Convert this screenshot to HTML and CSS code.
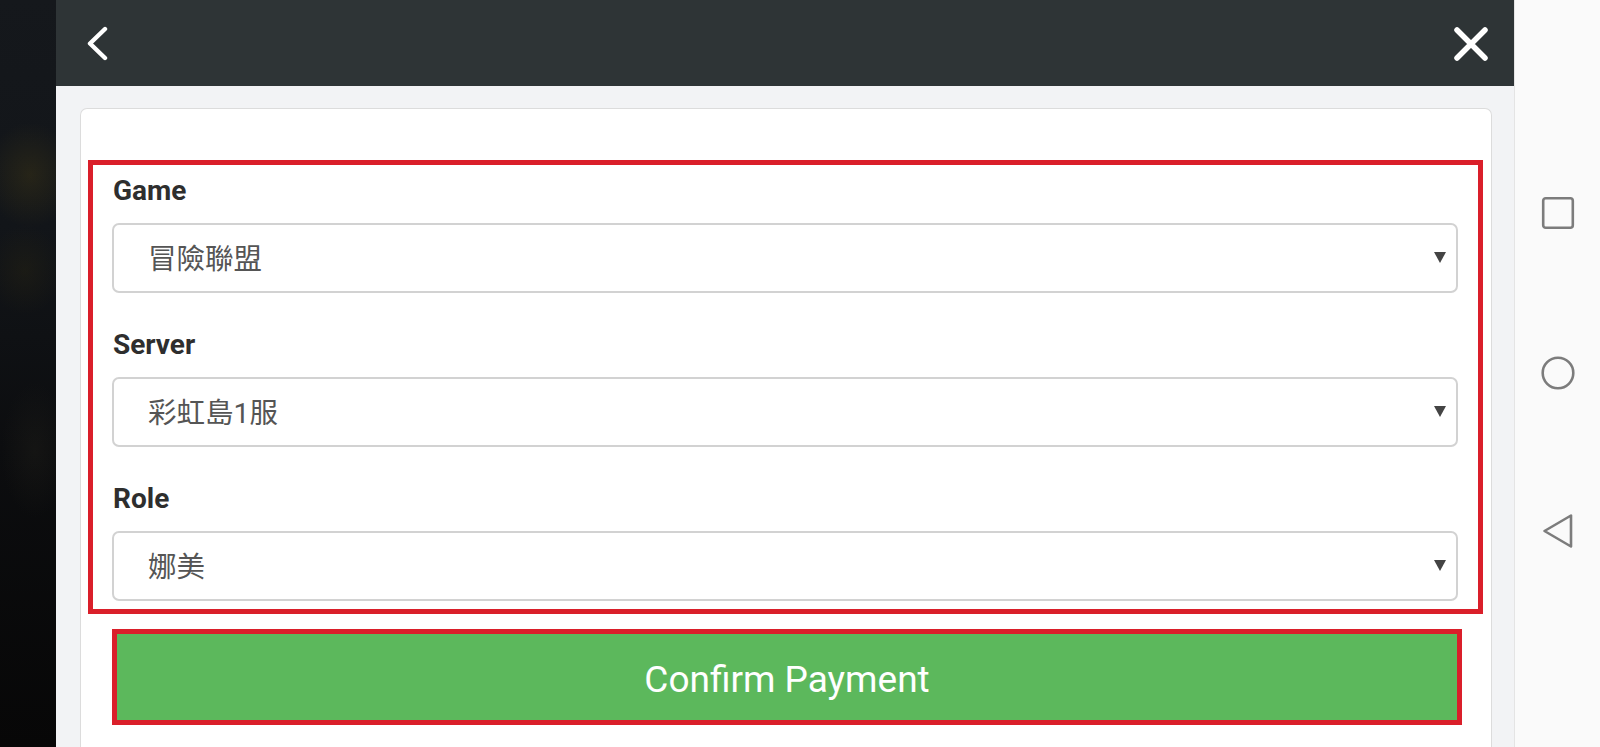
FILE: index.html
```html
<!DOCTYPE html>
<html lang="zh-Hant">
<head>
<meta charset="utf-8">
<title>Confirm Payment</title>
<link rel="stylesheet" href="styles.css">
</head>
<body>
<div class="screen">
  <div class="backdrop"></div>
  <div class="panel">
    <header class="topbar">
      <svg class="icon-back" width="24" height="36" viewBox="0 0 24 36" aria-hidden="true">
        <path d="M19 3 L4 17.5 L19 32" fill="none" stroke="#fff" stroke-width="4.4" stroke-linecap="round" stroke-linejoin="round"/>
      </svg>
      <svg class="icon-close" width="38" height="36" viewBox="0 0 38 36" aria-hidden="true">
        <path d="M5 4 L33 32 M33 4 L5 32" fill="none" stroke="#fff" stroke-width="5.5" stroke-linecap="round"/>
      </svg>
    </header>
    <main class="content">
      <section class="card">
        <div class="form-box">
          <div class="field">
            <label class="field-label">Game</label>
            <div class="select">
              <span class="select-value">冒險聯盟</span>
              <svg class="select-arrow" width="12" height="11" viewBox="0 0 12 11" aria-hidden="true"><polygon points="0,0 12,0 6,11" fill="#444"/></svg>
            </div>
          </div>
          <div class="field">
            <label class="field-label">Server</label>
            <div class="select">
              <span class="select-value">彩虹島1服</span>
              <svg class="select-arrow" width="12" height="11" viewBox="0 0 12 11" aria-hidden="true"><polygon points="0,0 12,0 6,11" fill="#444"/></svg>
            </div>
          </div>
          <div class="field">
            <label class="field-label">Role</label>
            <div class="select">
              <span class="select-value">娜美</span>
              <svg class="select-arrow" width="12" height="11" viewBox="0 0 12 11" aria-hidden="true"><polygon points="0,0 12,0 6,11" fill="#444"/></svg>
            </div>
          </div>
        </div>
        <div class="btn-wrap">
          <button class="btn-confirm" type="button">Confirm Payment</button>
        </div>
      </section>
    </main>
  </div>
  <nav class="navbar">
    <svg class="nav-recent" width="34" height="34" viewBox="0 0 34 34" aria-hidden="true"><rect x="2.2" y="2.2" width="29.6" height="29.6" rx="2.5" fill="none" stroke="#7c7c7c" stroke-width="2.6"/></svg>
    <svg class="nav-home" width="36" height="36" viewBox="0 0 36 36" aria-hidden="true"><circle cx="18" cy="18" r="15.3" fill="none" stroke="#7c7c7c" stroke-width="2.6"/></svg>
    <svg class="nav-back" width="34" height="38" viewBox="0 0 34 38" aria-hidden="true"><path d="M30 3.5 L30 34.5 L3.5 19 Z" fill="none" stroke="#7c7c7c" stroke-width="2.6" stroke-linejoin="round"/></svg>
  </nav>
</div>
</body>
</html>
```

FILE: styles.css
```css
* {
  box-sizing: border-box;
}

html, body {
  margin: 0;
  padding: 0;
  width: 1600px;
  height: 747px;
  overflow: hidden;
  font-family: Roboto, "Noto Sans CJK TC", sans-serif;
}

.screen {
  display: flex;
  width: 1600px;
  height: 747px;
}

.backdrop {
  width: 56px;
  flex: none;
  background:
    radial-gradient(ellipse 60px 70px at 30px 175px, rgba(62, 54, 22, 0.45), rgba(0, 0, 0, 0) 75%),
    radial-gradient(ellipse 50px 60px at 25px 270px, rgba(45, 40, 18, 0.35), rgba(0, 0, 0, 0) 75%),
    radial-gradient(ellipse 45px 90px at 35px 450px, rgba(40, 38, 30, 0.3), rgba(0, 0, 0, 0) 75%),
    linear-gradient(180deg, #15181c 0%, #121519 30%, #0c0d0f 60%, #070707 100%);
}

.panel {
  flex: 1;
  display: flex;
  flex-direction: column;
  background: #f2f3f5;
  min-width: 0;
}

.topbar {
  height: 86px;
  flex: none;
  background: #2e3436;
  display: flex;
  align-items: center;
  justify-content: space-between;
  padding: 0 24px 0 30px;
}

.icon-back,
.icon-close {
  display: block;
  margin-top: 1px;
}

.content {
  flex: 1;
  padding: 22px 22px 0 24px;
  overflow: hidden;
}

.card {
  background: #fff;
  border: 1px solid #dcdcdc;
  border-bottom: none;
  border-radius: 7px 7px 0 0;
  height: 100%;
  padding: 51px 8px 0 7px;
}

.form-box {
  border: 5px solid #da1f2a;
  padding: 10px 20px 8px 19px;
}

.field + .field {
  margin-top: 36px;
}

.field-label {
  display: block;
  font-family: Roboto, sans-serif;
  font-weight: 700;
  font-size: 28px;
  line-height: 32px;
  color: #2e2e2e;
  padding-left: 1px;
  margin-bottom: 16px;
}

.select {
  height: 70px;
  border: 2px solid #d2d2d2;
  border-radius: 7px;
  background: #fff;
  display: flex;
  align-items: center;
  justify-content: space-between;
  padding: 0 10px 0 34px;
}

.select-value {
  font-family: Roboto, "Noto Sans CJK TC", sans-serif;
  font-size: 28.5px;
  line-height: 34px;
  color: #555;
  padding-top: 3px;
}

.select-arrow {
  display: block;
  margin-top: -2px;
}

.btn-wrap {
  padding: 15px 21px 0 24px;
}

.btn-confirm {
  display: block;
  width: 100%;
  height: 96px;
  border: 5px solid #da1f2a;
  background: #5cb85c;
  color: #fff;
  font-family: Roboto, sans-serif;
  font-size: 37px;
  font-weight: 400;
  padding: 4px 0 0;
  margin: 0;
  text-align: center;
}

.navbar {
  width: 86px;
  flex: none;
  background: #fafafa;
  border-left: 1px solid #e4e4e4;
  display: flex;
  flex-direction: column;
  align-items: center;
  padding-top: 196px;
}

.nav-home {
  margin-top: 125px;
}

.nav-back {
  margin-top: 121px;
}
```
